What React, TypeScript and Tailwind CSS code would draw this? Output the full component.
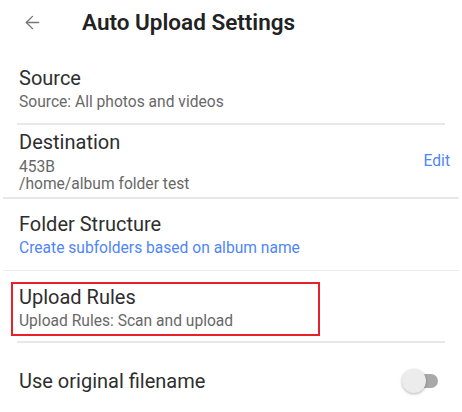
import { ArrowLeft } from 'lucide-react'

// Auto upload settings screen

const font = { fontFamily: 'Roboto, "Noto Sans", sans-serif' }

function Toggle() {
  return (
    <div className="relative w-[38px] h-[24px] flex items-center">
      <div className="ml-[10px] w-[26px] h-[14px] rounded-full bg-[#a9a9a9]" />
      <div className="absolute left-0 top-0 w-[24px] h-[24px] rounded-full bg-[#ececec] shadow-[0_1px_3px_rgba(0,0,0,0.3)]" />
    </div>
  )
}

export default function App() {
  return (
    <div className="w-[462px] h-[412px] bg-white overflow-hidden text-[#2e2e2e]" style={font}>
      <div className="h-[44px] flex items-center">
        <ArrowLeft className="ml-[22px] w-[21px] h-[21px] text-[#777]" strokeWidth={1.6} />
        <h1 className="ml-[39px] text-[22.5px] font-semibold text-[#222] leading-none">Auto Upload Settings</h1>
      </div>

      <div className="px-[19px] pt-[23px] pb-[12px]">
        <div className="text-[20px] leading-[22px]">Source</div>
        <div className="mt-[4px] text-[15.6px] leading-[18px] text-[#686868]">Source: All photos and videos</div>
      </div>
      <div className="mx-[17px] h-[2px] bg-[#e8e8e8]" />

      <div className="pl-[19px] pr-[12px] pt-[6px] pb-[4px] flex items-center">
        <div className="flex-1">
          <div className="text-[20px] leading-[22px]">Destination</div>
          <div className="mt-[7px] text-[15.6px] leading-[15px] text-[#686868]">453B</div>
          <div className="text-[15.6px] leading-[18px] text-[#686868]">/home/album folder test</div>
        </div>
        <span className="text-[15.6px] text-[#4f86f7]">Edit</span>
      </div>
      <div className="mx-[3px] h-[2px] bg-[#e8e8e8]" />

      <div className="px-[19px] pt-[14px] pb-[13px]">
        <div className="text-[20px] leading-[22px]">Folder Structure</div>
        <div className="mt-[4px] text-[15.6px] leading-[18px] text-[#4f86f7]">Create subfolders based on album name</div>
      </div>
      <div className="mx-[3px] h-[1px] bg-[#ececec]" />

      <div className="pt-[11px] pb-[5px] pl-[11px]">
        <div className="w-[309px] border-2 border-[#e8202a] pl-[6px] pt-[2px] pb-[4px]">
          <div className="text-[20px] leading-[22px]">Upload Rules</div>
          <div className="mt-[4px] text-[15.6px] leading-[18px] text-[#686868]">Upload Rules: Scan and upload</div>
        </div>
      </div>
      <div className="mx-[17px] h-[2px] bg-[#e8e8e8]" />

      <div className="pl-[19px] pr-[22px] pt-[26px] flex items-center justify-between">
        <span className="text-[20px] leading-[22px]">Use original filename</span>
        <Toggle />
      </div>
    </div>
  )
}
